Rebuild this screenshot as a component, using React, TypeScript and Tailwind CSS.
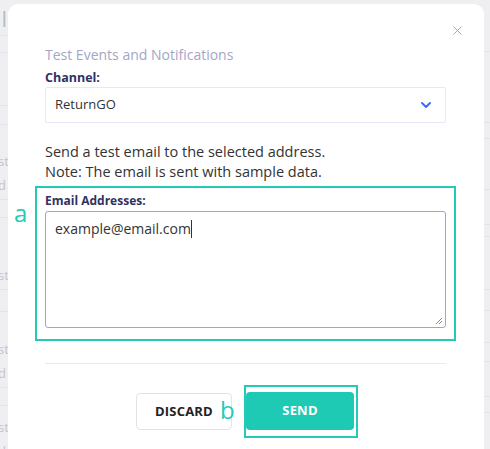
import { X, ChevronDown } from 'lucide-react'

const font = { fontFamily: "'Open Sans', 'Liberation Sans', sans-serif" }

// faint page behind the modal: rows of a table, cut off at the edges
const leftRows = [
  { h: 36, t: 'il', big: true },
  { h: 17, t: '' },
  { h: 53, t: '' },
  { h: 19, t: '' },
  { h: 75, t: 'st', sub: 'd' },
  { h: 18, t: '' },
  { h: 72, t: 'st' },
  { h: 22, t: '' },
  { h: 76, t: 'st', sub: 'd' },
  { h: 18, t: '' },
  { h: 60, t: 'st', sub: 'd' },
]
const rightRows = [52, 71, 16, 51, 35, 12, 53, 21, 32, 19, 35, 16, 40]

function App() {
  return (
    <div className="w-[490px] h-[449px] overflow-hidden bg-[#efeff1] flex" style={font}>
      <div className="w-[8px] shrink-0 flex flex-col overflow-hidden text-[#c4c4cc] text-[13px] leading-[18px]">
        {leftRows.map((r, i) => (
          <div
            key={i}
            className="shrink-0 border-b border-[#e4e4e8] flex flex-col justify-end -ml-[2px] pb-[5px]"
            style={{ height: r.h }}
          >
            {r.big ? <span className="text-[22px] leading-[24px] text-[#b9b9c9] -ml-[2px]">{r.t}</span> : r.t && <span>{r.t}</span>}
            {r.sub && <span className="mt-[6px]">{r.sub}</span>}
          </div>
        ))}
      </div>

      <div className="relative w-[476px] shrink-0 mt-[4px] h-[470px] bg-white rounded-[10px] pl-[37px] pr-[38px] pt-[41px]">
        <X className="absolute right-[19px] top-[19px] w-[15px] h-[15px] text-[#9799b6]" strokeWidth={1.4} />

        <div className="text-[14px] leading-[20px] text-[#a4a6c6]">Test Events and Notifications</div>

        <div className="mt-[5px] text-[12.5px] leading-[16px] font-bold text-[#2f3263]">Channel:</div>
        <div className="mt-[1px] h-[36px] border border-[#e6e8f8] rounded-[2px] flex items-center justify-between pl-[9px] pr-[11px]">
          <span className="text-[13px] text-[#333]">ReturnGO</span>
          <ChevronDown className="w-[16px] h-[16px] text-[#3d6ef2]" strokeWidth={3} />
        </div>

        <div className="mt-[19px] text-[14.5px] leading-[20px] text-[#333]">
          <div>Send a test email to the selected address.</div>
          <div>Note: The email is sent with sample data.</div>
        </div>

        <div className="relative mt-[4px] -mx-[10px] border-2 border-[#21cbb5] px-[8px] pt-[5px] pb-[11px]">
          <span className="absolute -left-[23px] top-[11px] text-[24px] leading-[28px] text-[#21cbb5]">a</span>
          <div className="text-[12px] leading-[16px] font-bold text-[#2f3263]">Email Addresses:</div>
          <div className="relative mt-[2px] h-[117px] border border-[#8ea7f2] rounded-[3px] pl-[9px] pt-[7px] text-[14px] leading-[20px] text-[#333]">
            example@email.com<span className="inline-block w-px h-[18px] bg-[#333] align-[-4px]" />
            <svg className="absolute right-[2px] bottom-[2px]" width="8" height="8" viewBox="0 0 8 8">
              <path d="M7 1L1 7M7 4L4 7" stroke="#8a8a8a" strokeWidth="1" />
            </svg>
          </div>
        </div>

        <div className="mt-[22px] h-px bg-[#e9e9f1]" />

        <div className="mt-[21px] flex items-center justify-center gap-[12px] pl-[3px]">
          <div className="relative w-[96px] h-[37px] border border-[#e3e3e6] rounded-[4px] flex items-center pl-[18px] text-[13px] font-bold text-[#222] tracking-[0.2px]">
            DISCARD
            <span className="absolute left-[83px] top-[1px] text-[24px] leading-[30px] font-normal text-[#21cbb5]">b</span>
          </div>
          <div className="w-[114px] h-[53px] border-2 border-[#21cbb5] pt-[5px] pr-[2px]">
            <div className="h-[38px] bg-[#1fcab5] rounded-[4px] flex items-center justify-center text-[13px] font-bold text-white tracking-[0.2px]">
              SEND
            </div>
          </div>
        </div>
      </div>

      <div className="w-[6px] shrink-0 flex flex-col">
        {rightRows.map((h, i) => (
          <div key={i} className="shrink-0 border-b border-[#e4e4e8]" style={{ height: h }} />
        ))}
      </div>
    </div>
  )
}

export default App
